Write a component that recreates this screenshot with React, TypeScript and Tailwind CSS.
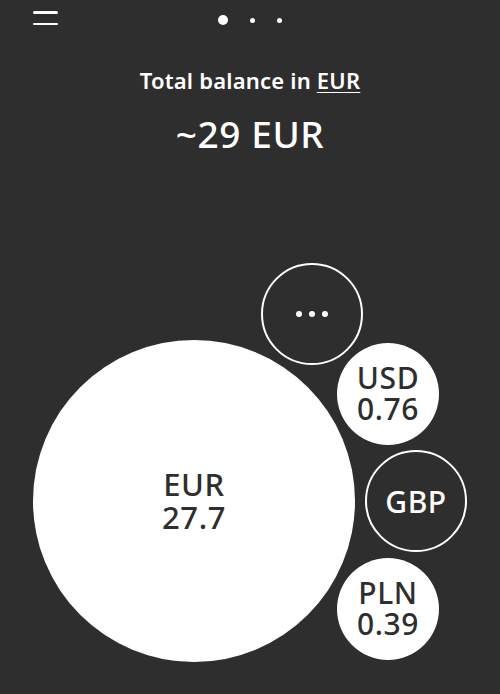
import React from "react";

const font = { fontFamily: '"Noto Sans", "Open Sans", sans-serif' };

function Bubble({
  x,
  y,
  r,
  filled,
  children,
}: {
  x: number;
  y: number;
  r: number;
  filled: boolean;
  children: React.ReactNode;
}) {
  return (
    <div
      className={
        "absolute flex flex-col items-center justify-center rounded-full " +
        (filled ? "bg-white text-[#2e2e2e]" : "border-2 border-white text-white")
      }
      style={{ left: x - r, top: y - r, width: r * 2, height: r * 2 }}
    >
      {children}
    </div>
  );
}

export default function App() {
  return (
    <div
      className="relative h-[694px] w-[500px] overflow-hidden bg-[#2e2e2e] text-white"
      style={font}
    >
      <div className="relative flex h-[40px] items-center justify-center">
        <div className="absolute left-[33px] top-[11px] flex w-[25px] flex-col gap-[9px]">
          <div className="h-[2.5px] rounded-full bg-white" />
          <div className="h-[2.5px] rounded-full bg-white" />
        </div>
        <div className="flex items-center gap-[22px]">
          <div className="h-[10px] w-[10px] rounded-full bg-white" />
          <div className="h-[5px] w-[5px] rounded-full bg-white" />
          <div className="h-[5px] w-[5px] rounded-full bg-white" />
        </div>
      </div>
      <div className="mt-[24px] text-center text-[22px] font-semibold leading-[32px] tracking-[0.2px]">
        Total balance in{" "}
        <span className="underline decoration-1 underline-offset-[3px]">EUR</span>
      </div>
      <div className="mt-[14px] text-center text-[37px] font-medium leading-[48px] tracking-[0.6px]">
        ~29 EUR
      </div>
      <div className="absolute inset-0">
        <Bubble x={194} y={501} r={161} filled>
          <div className="text-center text-[31px] font-medium leading-[33px] tracking-[0.6px]">
            EUR
            <br />
            27.7
          </div>
        </Bubble>
        <Bubble x={312} y={313.5} r={51} filled={false}>
          <div className="flex gap-[7px]">
            <div className="h-[6px] w-[6px] rounded-full bg-white" />
            <div className="h-[6px] w-[6px] rounded-full bg-white" />
            <div className="h-[6px] w-[6px] rounded-full bg-white" />
          </div>
        </Bubble>
        <Bubble x={388} y={393.5} r={51} filled>
          <div className="mt-[-2px] text-center text-[30px] font-medium leading-[31px] tracking-[0.6px]">
            USD
            <br />
            0.76
          </div>
        </Bubble>
        <Bubble x={416} y={501} r={51} filled={false}>
          <div className="text-[30px] font-medium leading-[31px] tracking-[0.6px]">GBP</div>
        </Bubble>
        <Bubble x={388} y={608.5} r={51} filled>
          <div className="mt-[-2px] text-center text-[30px] font-medium leading-[31px] tracking-[0.6px]">
            PLN
            <br />
            0.39
          </div>
        </Bubble>
      </div>
    </div>
  );
}
